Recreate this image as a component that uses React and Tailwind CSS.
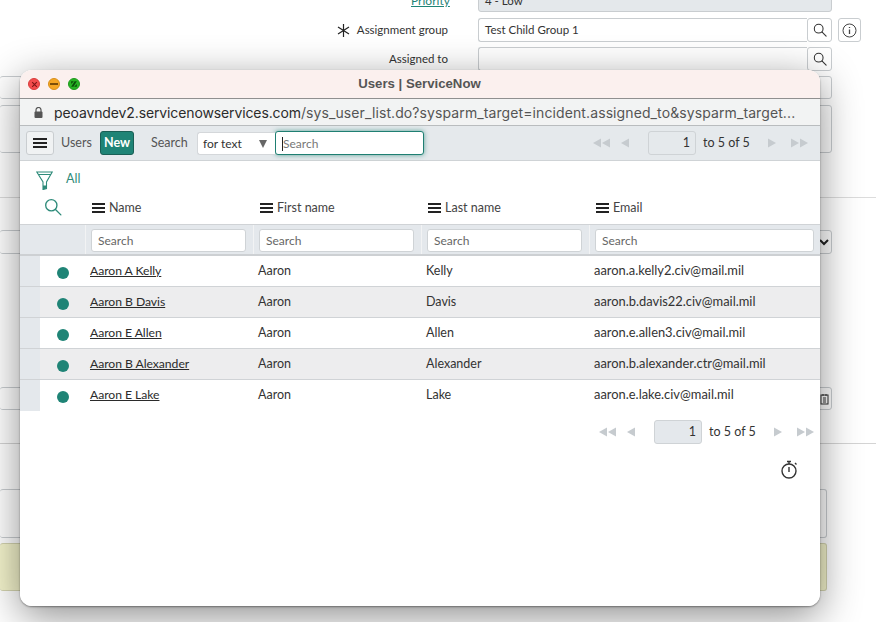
import React from "react";

const ui = "font-['Lato','Noto_Sans',sans-serif]";

function Mag({ className = "", size = 16, sw = 1.2 }) {
  return (
    <svg className={className} width={size} height={size} viewBox="0 0 16 16" fill="none" stroke="currentColor" strokeWidth={sw}>
      <circle cx="6.5" cy="6.5" r="5" />
      <path d="M10.2 10.2 15 15" strokeLinecap="round" />
    </svg>
  );
}

function Burger({ w = 14 }) {
  return (
    <svg width={w} height="10" viewBox="0 0 14 10" preserveAspectRatio="none" fill="currentColor">
      <rect y="0" width="14" height="2" />
      <rect y="4" width="14" height="2" />
      <rect y="8" width="14" height="2" />
    </svg>
  );
}

function Arrow({ dir, double, className = "" }) {
  const tri = (x) => (dir === "l" ? `M${x + 8} 0.5 V9.5 L${x} 5 Z` : `M${x} 0.5 V9.5 L${x + 8} 5 Z`);
  return (
    <svg className={className} width={double ? 17 : 9} height="10" viewBox={double ? "0 0 17 10" : "0 0 9 10"} fill="#c6cbcf">
      <path d={tri(0)} />
      {double && <path d={tri(9)} />}
    </svg>
  );
}

function Pager({ bg }) {
  return (
    <div className="flex items-center text-[12.5px] text-[#333]">
      <Arrow dir="l" double />
      <Arrow dir="l" className="ml-[11px]" />
      <div className={`ml-[18px] w-[48px] h-[24px] rounded-[3px] border border-[#cfd3d6] flex items-center justify-end pr-[5px] text-[12.5px] ${bg}`}>1</div>
      <span className="ml-[7px] w-[46px] whitespace-nowrap">to 5 of 5</span>
      <Arrow dir="r" className="ml-[19px]" />
      <Arrow dir="r" double className="ml-[14px]" />
    </div>
  );
}

const users = [
  ["Aaron A Kelly", "Aaron", "Kelly", "aaron.a.kelly2.civ@mail.mil"],
  ["Aaron B Davis", "Aaron", "Davis", "aaron.b.davis22.civ@mail.mil"],
  ["Aaron E Allen", "Aaron", "Allen", "aaron.e.allen3.civ@mail.mil"],
  ["Aaron B Alexander", "Aaron", "Alexander", "aaron.b.alexander.ctr@mail.mil"],
  ["Aaron E Lake", "Aaron", "Lake", "aaron.e.lake.civ@mail.mil"],
];

const cols = "grid grid-cols-[65px_168px_168px_168px_231px]";

function Background() {
  const field = "border border-[#c9cdd0] rounded-[3px]";
  const row = "flex items-center shrink-0";
  return (
    <div className={`w-[876px] h-[622px] overflow-hidden bg-white text-[11.5px] text-[#333] ${ui}`}>
      <div className={`${row} h-[23px] -mt-[11px]`}>
        <a className="ml-[411px] text-[#1f8476] underline w-[37px] text-[12px]">Priority</a>
        <div className={`ml-[30px] w-[354px] h-full ${field} bg-[#e4e8eb] px-[6px] leading-[21px]`}>4 - Low</div>
      </div>
      <div className={`${row} h-[24px] mt-[6px]`}>
        <span className="w-[448px] flex justify-end items-center gap-[7px]">
          <svg width="13" height="13" viewBox="0 0 13 13" fill="none" stroke="#222" strokeWidth="1.2"><path d="M6.5 0v13M1 3l11 7M12 3 1 10" /></svg>
          Assignment group
        </span>
        <div className={`ml-[30px] w-[329px] h-full ${field} border-r-0 rounded-r-none px-[6px] leading-[22px]`}>Test Child Group 1</div>
        <div className={`w-[25px] h-full ${field} flex items-center justify-center`}><Mag size={14} /></div>
        <div className={`ml-[6px] w-[23px] h-full ${field} flex items-center justify-center`}>
          <svg width="15" height="15" viewBox="0 0 15 15" fill="none" stroke="#444"><circle cx="7.5" cy="7.5" r="6.5" /><path d="M7.5 6.5V11M7.5 4V5" strokeWidth="1.3" /></svg>
        </div>
      </div>
      <div className={`${row} h-[24px] mt-[5px]`}>
        <span className="w-[448px] text-right">Assigned to</span>
        <div className={`ml-[30px] w-[329px] h-full ${field} border-r-0 rounded-r-none`} />
        <div className={`w-[25px] h-full ${field} flex items-center justify-center`}><Mag size={14} /></div>
      </div>
      <div className={`${row} h-[23px] mt-[5px]`}>
        <div className={`w-[300px] h-full ${field} border-l-0`} />
        <div className={`ml-[178px] w-[354px] h-full ${field}`} />
      </div>
      <div className={`${row} h-[48px] mt-[6px]`}>
        <div className={`w-[300px] h-full ${field} border-l-0`} />
        <div className={`ml-[178px] w-[354px] h-full ${field}`} />
      </div>
      <div className="h-px bg-[#dcdcdc] mt-[44px]" />
      <div className={`${row} h-[24px] mt-[32px]`}>
        <div className={`w-[300px] h-full ${field} border-l-0`} />
        <div className={`ml-[178px] w-[354px] h-full ${field} flex items-center justify-end pr-[2px]`}>
          <svg width="10" height="8" viewBox="0 0 10 8" fill="none" stroke="#222" strokeWidth="2"><path d="M1 2l4 4 4-4" /></svg>
        </div>
      </div>
      <div className={`${row} h-[23px] mt-[133px]`}>
        <div className={`w-[300px] h-full ${field} border-l-0`} />
        <div className={`ml-[178px] w-[354px] h-full ${field} flex items-center justify-end pr-[2px]`}>
          <svg width="9" height="12" viewBox="0 0 9 12" fill="none" stroke="#333"><rect x="1" y="2" width="7" height="9" /><path d="M3 1v2M6 1v2M3 5h3M3 7h3M3 9h3" /></svg>
        </div>
      </div>
      <div className="h-px bg-[#d4d4d4] mt-[33px]" />
      <div className={`${row} h-[49px] mt-[45px]`}>
        <div className={`w-[827px] h-full ${field} border-l-0`} />
      </div>
      <div className={`${row} h-[48px] mt-[5px]`}>
        <div className="w-[827px] h-full border border-[#d4d4b0] border-l-0 rounded-[3px] bg-[#f4f4cc]" />
      </div>
    </div>
  );
}

function Window() {
  return (
    <div className={`absolute left-[20px] top-[70px] w-[800px] h-[536px] rounded-[12px] overflow-hidden bg-white flex flex-col text-[12.5px] text-[#333] ${ui}`}>
      <div className="h-[29px] shrink-0 bg-[#fbf0ee] border-b border-[#8f8f8f] relative flex items-center justify-center font-['Liberation_Sans',sans-serif] font-bold text-[13.2px] text-[#555]">
        <div className="absolute left-[8px] top-[8px] flex gap-[8px]">
          <span className="w-[12px] h-[12px] rounded-full bg-[#f34c4c] border border-[#d83c3c] flex items-center justify-center">
            <svg width="7" height="7" viewBox="0 0 6 6" stroke="#7a1515" strokeWidth="0.9"><path d="M1 1l4 4M5 1L1 5" /></svg>
          </span>
          <span className="w-[12px] h-[12px] rounded-full bg-[#f5a623] border border-[#d88f1c] flex items-center justify-center">
            <span className="w-[8px] h-[1.5px] bg-[#7c4e08]" />
          </span>
          <span className="w-[12px] h-[12px] rounded-full bg-[#27b324] border border-[#1f9a1d] flex items-center justify-center">
            <svg width="8" height="8" viewBox="0 0 7 7" fill="#0b4f0a"><path d="M1 3.6 3.4 1H1zM6 3.4 3.6 6H6z" /><path d="M1 6h2L6 1H4z" /></svg>
          </span>
        </div>
        <span className="-ml-[1px]">Users | ServiceNow</span>
      </div>
      <div className="h-[27px] shrink-0 bg-[#f2f3f3] border-b border-[#b9bcbe] flex items-center pl-[14px] font-['Inter',sans-serif] text-[14px] text-[#555] whitespace-nowrap">
        <svg className="shrink-0" width="9" height="11" viewBox="0 0 9 11" fill="#555"><rect x="0.5" y="4.5" width="8" height="6.5" rx="1" /><path d="M2 5V3a2.5 2.5 0 0 1 5 0v2" fill="none" stroke="#555" strokeWidth="1.2" /></svg>
        <span className="ml-[11px] tracking-[0.1px]"><span className="text-[#2b2b2b] tracking-[-0.12px]">peoavndev2.servicenowservices.com</span>/sys_user_list.do?sysparm_target=incident.assigned_to&amp;sysparm_target...</span>
      </div>
      <div className="h-[35px] shrink-0 bg-[#e5e9ec] border-b border-[#cfd3d6] flex items-center pl-[6px] pr-[12px]">
        <button className="w-[28px] h-[24px] rounded-[3px] border border-[#c9cdd0] bg-[#f0f2f3] flex items-center justify-center text-[#222]"><Burger /></button>
        <span className="ml-[7px] w-[30px] pt-[1px] text-[#555]">Users</span>
        <button className="ml-[9px] w-[34px] h-[24px] rounded-[3px] border border-[#1a5f55] bg-[#1f8476] text-white text-[12.5px] font-bold">New</button>
        <span className="ml-[17px] w-[37px] pt-[1px] text-[#555]">Search</span>
        <div className="ml-[9px] w-[78px] h-[23px] bg-white rounded-l-[3px] border border-[#d4d7da] border-r-0 flex items-center pl-[5px] pt-[1px] text-[12px] relative">
          for text
          <svg className="absolute right-[8px] top-[7px]" width="8" height="8" viewBox="0 0 8 8" fill="#666"><path d="M0 0h8L4 8z" /></svg>
        </div>
        <div className="w-[149px] h-[24px] bg-white rounded-[3px] border border-[#1f7f72] shadow-[0_0_5px_rgba(31,132,118,0.7)] flex items-center pl-[6px] pt-[1px] text-[12px] text-[#777]">
          <span className="w-px h-[14px] bg-[#222]" />Search
        </div>
        <div className="ml-auto"><Pager bg="bg-[#e5e9ec]" /></div>
      </div>
      <div className="h-[37px] shrink-0 flex items-start pl-[16px] pt-[10px]">
        <svg width="17" height="19" viewBox="0 0 17 19" fill="none" stroke="#2e8b7a" strokeWidth="1.1">
          <path d="M.8 1h15.4L10.5 11v6.5l-3.5 1V11ZM2.5 3.5h12" />
          <path d="M7 14.5h3.5v3l-3.5 1Z" fill="#2e8b7a" stroke="none" />
        </svg>
        <span className="ml-[13px] -mt-[1px] text-[#2e8b7a]">All</span>
      </div>
      <div className="h-[26px] shrink-0">
        <div className={`${cols} h-full items-start`}>
          <div className="pl-[24px] pt-[1px] text-[#2e8b7a] -mt-[1px]"><Mag size={18} /></div>
          {["Name", "First name", "Last name", "Email"].map((h) => (
            <div key={h} className="pl-[7px] pt-[1px] flex items-center gap-[4px] text-[#444]"><span className="text-[#222] flex"><Burger w={13} /></span>{h}</div>
          ))}
        </div>
      </div>
      <div className={`${cols} h-[32px] shrink-0 bg-[#e4e8ec] border-t border-[#d0d3d6] border-b-2 border-b-[#cdd0d3]`}>
        <div />
        {[155, 155, 155, 219].map((w, i) => (
          <div key={i} className="border-l border-[#f2f3f4] pl-[5px] pt-[4px]">
            <div style={{ width: w }} className="h-[23px] bg-white rounded-[3px] border border-[#cfd3d6] flex items-center pl-[6px] text-[12px] text-[#666]">Search</div>
          </div>
        ))}
      </div>
      {users.map((u, i) => (
        <div key={u[0]} className={`${cols} h-[31px] shrink-0 border-b border-[#d0d3d6] ${i % 2 ? "bg-[#ededee]" : "bg-white"} ${i === 4 ? "border-b-0" : ""}`}>
          <div className="flex h-full">
            <div className="w-[20px] bg-[#e4e8ec]" />
            <div className="ml-[17px] mt-[11px] w-[12px] h-[12px] rounded-full bg-[#1f8476]" />
          </div>
          <div className="pl-[5px] leading-[29px] underline text-[#2b2b2b] text-[12.2px] tracking-[-0.05px]">{u[0]}</div>
          <div className="pl-[5px] leading-[29px]">{u[1]}</div>
          <div className="pl-[5px] leading-[29px]">{u[2]}</div>
          <div className="pl-[5px] leading-[29px] text-[12.9px]">{u[3]}</div>
        </div>
      ))}
      <div className="flex justify-end pr-[6px] mt-[9px]">
        <Pager bg="bg-[#e4e8ec]" />
      </div>
      <div className="flex justify-end pr-[21px] mt-[16px] text-[#333]">
        <svg width="18" height="19" viewBox="0 0 18 19" fill="none" stroke="currentColor" strokeWidth="1.4">
          <circle cx="8" cy="11" r="7" />
          <path d="M8 7v5M6 1.5h4M8 1.5V4M14 3l1.5 1.5" />
        </svg>
      </div>
    </div>
  );
}

export default function App() {
  return (
    <div className="relative w-[876px] h-[622px] overflow-hidden">
      <Background />
      <div className="absolute left-[20px] top-[70px] w-[800px] h-[536px] rounded-[12px] shadow-[0_10px_40px_rgba(0,0,0,0.45),0_1px_2px_rgba(0,0,0,0.4)]" />
      <Window />
    </div>
  );
}
